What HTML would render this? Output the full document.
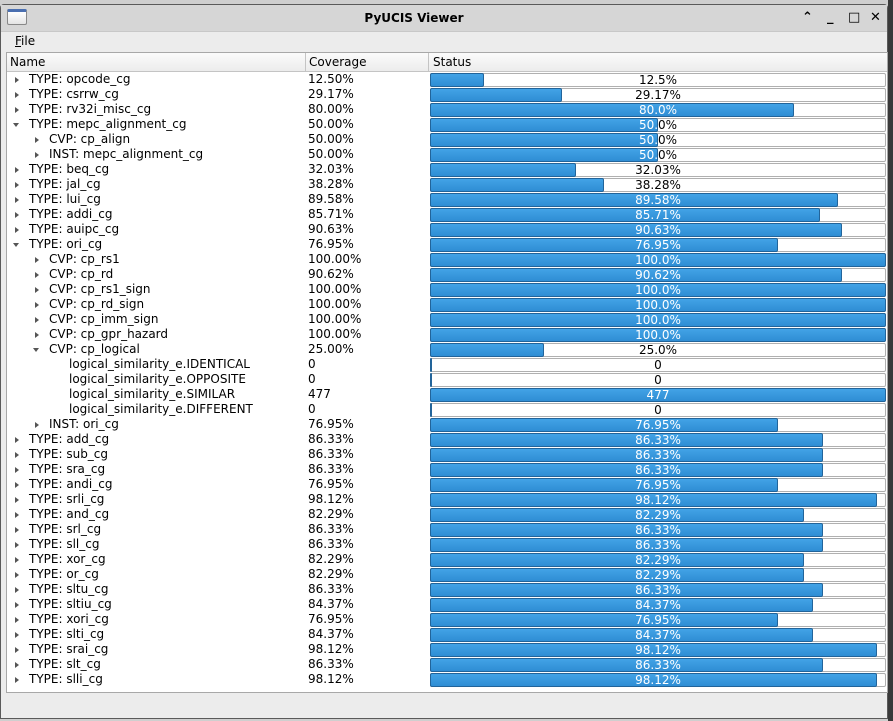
<!DOCTYPE html>
<html><head><meta charset="utf-8"><style>
*{margin:0;padding:0;box-sizing:border-box}
body{width:893px;height:721px;overflow:hidden;background:#cfcfcf;font-family:"DejaVu Sans","Liberation Sans",sans-serif;font-size:12px;color:#000;position:relative}
#win{position:absolute;left:0;top:4px;width:888px;height:715px;background:#ececec;border:1px solid #5a5a5a;border-radius:4px 4px 0 0}
#title{position:absolute;left:0;top:0;width:886px;height:27px;background:#d6d6d6;border-bottom:1px solid #c8c8c8}
#title .t{position:absolute;left:0;width:826px;top:6px;text-align:center;font-weight:bold;font-size:12px}
#title .ico{position:absolute;left:6px;top:4px;width:20px;height:16px;border:1px solid #888;background:linear-gradient(#fff,#e4e4e4);border-top:3px solid #4a6fb0;border-radius:2px}
.btn{position:absolute;top:5px;font-weight:bold;font-size:13px}
#menu{position:absolute;left:14px;top:29px;font-size:12px}
#tree{position:absolute;left:5px;top:47px;width:882px;height:641px;background:#fff;border:1px solid #a8a8a8}
#hdr{position:absolute;left:0;top:0;width:880px;height:19px;background:linear-gradient(#fbfbfb,#ececec);border-bottom:1px solid #c4c4c4}
#hdr div{position:absolute;top:2px}
#hdr .sep{top:0;width:1px;height:19px;background:#c4c4c4}
#rows{position:absolute;left:-1px;top:0;width:880px}
.r{position:absolute;left:0;height:15px;width:880px;line-height:15px}
.a{position:absolute;top:5px;width:0;height:0;border-left:4px solid #555;border-top:3px solid transparent;border-bottom:3px solid transparent}
.d{position:absolute;top:6px;width:0;height:0;border-top:4px solid #555;border-left:3px solid transparent;border-right:3px solid transparent}
.n{position:absolute;top:0;white-space:nowrap}
.c{position:absolute;left:302px;top:0}
.b{position:absolute;left:424px;top:1px;width:456px;height:14px;background:#fff;border:1px solid #b0b0b0;border-radius:2px}
.b .tx{position:absolute;left:0;top:-1px;width:454px;text-align:center;line-height:14px;color:#000}
.f{position:absolute;left:-1px;top:-1px;height:14px;overflow:hidden;background:linear-gradient(#42a3e6,#2f8dd4);border:1px solid #22649a;border-radius:2px}
.f .tx{color:#fff}
</style></head><body>
<div id="win">
<div id="title"><div class="ico"></div><div class="t">PyUCIS Viewer</div>
<div class="btn" style="left:801px">&#8963;</div><div class="btn" style="left:826px">_</div><div class="btn" style="left:847px">&#9633;</div><div class="btn" style="left:869px">✕</div></div>
<div id="menu"><u>F</u>ile</div>
<div id="tree">
<div id="hdr"><div style="left:3px">Name</div><div class="sep" style="left:298px"></div><div style="left:302px">Coverage</div><div class="sep" style="left:421px"></div><div style="left:426px">Status</div></div>
<div id="rows">
<div class="r" style="top:19px"><i class="a" style="left:9px"></i><span class="n" style="left:23px">TYPE: opcode_cg</span><span class="c">12.50%</span><div class="b"><span class="tx">12.5%</span><div class="f" style="width:54px"><span class="tx">12.5%</span></div></div></div>
<div class="r" style="top:34px"><i class="a" style="left:9px"></i><span class="n" style="left:23px">TYPE: csrrw_cg</span><span class="c">29.17%</span><div class="b"><span class="tx">29.17%</span><div class="f" style="width:132px"><span class="tx">29.17%</span></div></div></div>
<div class="r" style="top:49px"><i class="a" style="left:9px"></i><span class="n" style="left:23px">TYPE: rv32i_misc_cg</span><span class="c">80.00%</span><div class="b"><span class="tx">80.0%</span><div class="f" style="width:364px"><span class="tx">80.0%</span></div></div></div>
<div class="r" style="top:64px"><i class="d" style="left:7px"></i><span class="n" style="left:23px">TYPE: mepc_alignment_cg</span><span class="c">50.00%</span><div class="b"><span class="tx">50.0%</span><div class="f" style="width:228px"><span class="tx">50.0%</span></div></div></div>
<div class="r" style="top:79px"><i class="a" style="left:29px"></i><span class="n" style="left:43px">CVP: cp_align</span><span class="c">50.00%</span><div class="b"><span class="tx">50.0%</span><div class="f" style="width:228px"><span class="tx">50.0%</span></div></div></div>
<div class="r" style="top:94px"><i class="a" style="left:29px"></i><span class="n" style="left:43px">INST: mepc_alignment_cg</span><span class="c">50.00%</span><div class="b"><span class="tx">50.0%</span><div class="f" style="width:228px"><span class="tx">50.0%</span></div></div></div>
<div class="r" style="top:109px"><i class="a" style="left:9px"></i><span class="n" style="left:23px">TYPE: beq_cg</span><span class="c">32.03%</span><div class="b"><span class="tx">32.03%</span><div class="f" style="width:146px"><span class="tx">32.03%</span></div></div></div>
<div class="r" style="top:124px"><i class="a" style="left:9px"></i><span class="n" style="left:23px">TYPE: jal_cg</span><span class="c">38.28%</span><div class="b"><span class="tx">38.28%</span><div class="f" style="width:174px"><span class="tx">38.28%</span></div></div></div>
<div class="r" style="top:139px"><i class="a" style="left:9px"></i><span class="n" style="left:23px">TYPE: lui_cg</span><span class="c">89.58%</span><div class="b"><span class="tx">89.58%</span><div class="f" style="width:408px"><span class="tx">89.58%</span></div></div></div>
<div class="r" style="top:154px"><i class="a" style="left:9px"></i><span class="n" style="left:23px">TYPE: addi_cg</span><span class="c">85.71%</span><div class="b"><span class="tx">85.71%</span><div class="f" style="width:390px"><span class="tx">85.71%</span></div></div></div>
<div class="r" style="top:169px"><i class="a" style="left:9px"></i><span class="n" style="left:23px">TYPE: auipc_cg</span><span class="c">90.63%</span><div class="b"><span class="tx">90.63%</span><div class="f" style="width:412px"><span class="tx">90.63%</span></div></div></div>
<div class="r" style="top:184px"><i class="d" style="left:7px"></i><span class="n" style="left:23px">TYPE: ori_cg</span><span class="c">76.95%</span><div class="b"><span class="tx">76.95%</span><div class="f" style="width:348px"><span class="tx">76.95%</span></div></div></div>
<div class="r" style="top:199px"><i class="a" style="left:29px"></i><span class="n" style="left:43px">CVP: cp_rs1</span><span class="c">100.00%</span><div class="b"><span class="tx">100.0%</span><div class="f" style="width:456px"><span class="tx">100.0%</span></div></div></div>
<div class="r" style="top:214px"><i class="a" style="left:29px"></i><span class="n" style="left:43px">CVP: cp_rd</span><span class="c">90.62%</span><div class="b"><span class="tx">90.62%</span><div class="f" style="width:412px"><span class="tx">90.62%</span></div></div></div>
<div class="r" style="top:229px"><i class="a" style="left:29px"></i><span class="n" style="left:43px">CVP: cp_rs1_sign</span><span class="c">100.00%</span><div class="b"><span class="tx">100.0%</span><div class="f" style="width:456px"><span class="tx">100.0%</span></div></div></div>
<div class="r" style="top:244px"><i class="a" style="left:29px"></i><span class="n" style="left:43px">CVP: cp_rd_sign</span><span class="c">100.00%</span><div class="b"><span class="tx">100.0%</span><div class="f" style="width:456px"><span class="tx">100.0%</span></div></div></div>
<div class="r" style="top:259px"><i class="a" style="left:29px"></i><span class="n" style="left:43px">CVP: cp_imm_sign</span><span class="c">100.00%</span><div class="b"><span class="tx">100.0%</span><div class="f" style="width:456px"><span class="tx">100.0%</span></div></div></div>
<div class="r" style="top:274px"><i class="a" style="left:29px"></i><span class="n" style="left:43px">CVP: cp_gpr_hazard</span><span class="c">100.00%</span><div class="b"><span class="tx">100.0%</span><div class="f" style="width:456px"><span class="tx">100.0%</span></div></div></div>
<div class="r" style="top:289px"><i class="d" style="left:27px"></i><span class="n" style="left:43px">CVP: cp_logical</span><span class="c">25.00%</span><div class="b"><span class="tx">25.0%</span><div class="f" style="width:114px"><span class="tx">25.0%</span></div></div></div>
<div class="r" style="top:304px"><span class="n" style="left:63px">logical_similarity_e.IDENTICAL</span><span class="c">0</span><div class="b"><span class="tx">0</span><div class="f" style="width:2px"></div></div></div>
<div class="r" style="top:319px"><span class="n" style="left:63px">logical_similarity_e.OPPOSITE</span><span class="c">0</span><div class="b"><span class="tx">0</span><div class="f" style="width:2px"></div></div></div>
<div class="r" style="top:334px"><span class="n" style="left:63px">logical_similarity_e.SIMILAR</span><span class="c">477</span><div class="b"><span class="tx">477</span><div class="f" style="width:456px"><span class="tx">477</span></div></div></div>
<div class="r" style="top:349px"><span class="n" style="left:63px">logical_similarity_e.DIFFERENT</span><span class="c">0</span><div class="b"><span class="tx">0</span><div class="f" style="width:2px"></div></div></div>
<div class="r" style="top:364px"><i class="a" style="left:29px"></i><span class="n" style="left:43px">INST: ori_cg</span><span class="c">76.95%</span><div class="b"><span class="tx">76.95%</span><div class="f" style="width:348px"><span class="tx">76.95%</span></div></div></div>
<div class="r" style="top:379px"><i class="a" style="left:9px"></i><span class="n" style="left:23px">TYPE: add_cg</span><span class="c">86.33%</span><div class="b"><span class="tx">86.33%</span><div class="f" style="width:393px"><span class="tx">86.33%</span></div></div></div>
<div class="r" style="top:394px"><i class="a" style="left:9px"></i><span class="n" style="left:23px">TYPE: sub_cg</span><span class="c">86.33%</span><div class="b"><span class="tx">86.33%</span><div class="f" style="width:393px"><span class="tx">86.33%</span></div></div></div>
<div class="r" style="top:409px"><i class="a" style="left:9px"></i><span class="n" style="left:23px">TYPE: sra_cg</span><span class="c">86.33%</span><div class="b"><span class="tx">86.33%</span><div class="f" style="width:393px"><span class="tx">86.33%</span></div></div></div>
<div class="r" style="top:424px"><i class="a" style="left:9px"></i><span class="n" style="left:23px">TYPE: andi_cg</span><span class="c">76.95%</span><div class="b"><span class="tx">76.95%</span><div class="f" style="width:348px"><span class="tx">76.95%</span></div></div></div>
<div class="r" style="top:439px"><i class="a" style="left:9px"></i><span class="n" style="left:23px">TYPE: srli_cg</span><span class="c">98.12%</span><div class="b"><span class="tx">98.12%</span><div class="f" style="width:447px"><span class="tx">98.12%</span></div></div></div>
<div class="r" style="top:454px"><i class="a" style="left:9px"></i><span class="n" style="left:23px">TYPE: and_cg</span><span class="c">82.29%</span><div class="b"><span class="tx">82.29%</span><div class="f" style="width:374px"><span class="tx">82.29%</span></div></div></div>
<div class="r" style="top:469px"><i class="a" style="left:9px"></i><span class="n" style="left:23px">TYPE: srl_cg</span><span class="c">86.33%</span><div class="b"><span class="tx">86.33%</span><div class="f" style="width:393px"><span class="tx">86.33%</span></div></div></div>
<div class="r" style="top:484px"><i class="a" style="left:9px"></i><span class="n" style="left:23px">TYPE: sll_cg</span><span class="c">86.33%</span><div class="b"><span class="tx">86.33%</span><div class="f" style="width:393px"><span class="tx">86.33%</span></div></div></div>
<div class="r" style="top:499px"><i class="a" style="left:9px"></i><span class="n" style="left:23px">TYPE: xor_cg</span><span class="c">82.29%</span><div class="b"><span class="tx">82.29%</span><div class="f" style="width:374px"><span class="tx">82.29%</span></div></div></div>
<div class="r" style="top:514px"><i class="a" style="left:9px"></i><span class="n" style="left:23px">TYPE: or_cg</span><span class="c">82.29%</span><div class="b"><span class="tx">82.29%</span><div class="f" style="width:374px"><span class="tx">82.29%</span></div></div></div>
<div class="r" style="top:529px"><i class="a" style="left:9px"></i><span class="n" style="left:23px">TYPE: sltu_cg</span><span class="c">86.33%</span><div class="b"><span class="tx">86.33%</span><div class="f" style="width:393px"><span class="tx">86.33%</span></div></div></div>
<div class="r" style="top:544px"><i class="a" style="left:9px"></i><span class="n" style="left:23px">TYPE: sltiu_cg</span><span class="c">84.37%</span><div class="b"><span class="tx">84.37%</span><div class="f" style="width:383px"><span class="tx">84.37%</span></div></div></div>
<div class="r" style="top:559px"><i class="a" style="left:9px"></i><span class="n" style="left:23px">TYPE: xori_cg</span><span class="c">76.95%</span><div class="b"><span class="tx">76.95%</span><div class="f" style="width:348px"><span class="tx">76.95%</span></div></div></div>
<div class="r" style="top:574px"><i class="a" style="left:9px"></i><span class="n" style="left:23px">TYPE: slti_cg</span><span class="c">84.37%</span><div class="b"><span class="tx">84.37%</span><div class="f" style="width:383px"><span class="tx">84.37%</span></div></div></div>
<div class="r" style="top:589px"><i class="a" style="left:9px"></i><span class="n" style="left:23px">TYPE: srai_cg</span><span class="c">98.12%</span><div class="b"><span class="tx">98.12%</span><div class="f" style="width:447px"><span class="tx">98.12%</span></div></div></div>
<div class="r" style="top:604px"><i class="a" style="left:9px"></i><span class="n" style="left:23px">TYPE: slt_cg</span><span class="c">86.33%</span><div class="b"><span class="tx">86.33%</span><div class="f" style="width:393px"><span class="tx">86.33%</span></div></div></div>
<div class="r" style="top:619px"><i class="a" style="left:9px"></i><span class="n" style="left:23px">TYPE: slli_cg</span><span class="c">98.12%</span><div class="b"><span class="tx">98.12%</span><div class="f" style="width:447px"><span class="tx">98.12%</span></div></div></div>
</div>
</div>
</div>
<div style="position:absolute;left:888px;top:0;width:5px;height:721px;background:#3a3a3a"></div>
</body></html>
